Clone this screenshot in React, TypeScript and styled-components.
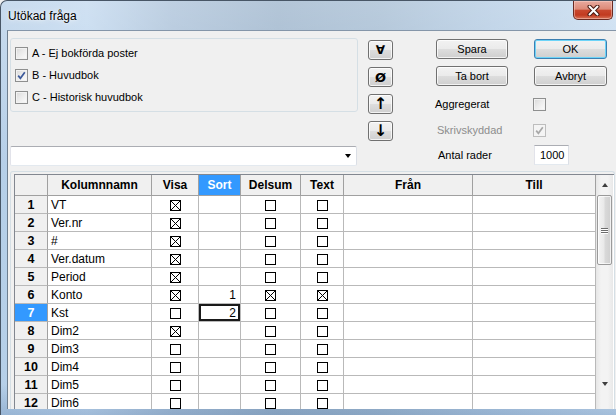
import React from 'react';
import styled, { createGlobalStyle } from 'styled-components';

const GlobalStyle = createGlobalStyle`
  html, body {
    margin: 0;
    padding: 0;
  }
  body {
    background: #f0f0f0;
    font-family: 'Liberation Sans', Arial, sans-serif;
    overflow: hidden;
  }
`;

const Window = styled.div`
  width: 616px;
  height: 415px;
  box-sizing: border-box;
  display: flex;
  flex-direction: column;
  border-top: 1px solid #485666;
  border-left: 1px solid #485666;
  border-top-left-radius: 7px;
  overflow: hidden;
  background:
    linear-gradient(180deg, rgba(255,255,255,0.25) 0%, rgba(255,255,255,0) 40%),
    linear-gradient(90deg, #b6cfe8 0%, #c0d7ee 14%, #a9c0d8 28%, #9bb3cb 45%, #a3bbd2 62%, #b3cbe3 80%, #c5dbf0 100%);
`;

const TitleBar = styled.div`
  height: 29px;
  display: flex;
  align-items: flex-start;
  flex: none;
`;

const Title = styled.div`
  flex: 1;
  padding: 8px 0 0 7px;
  font-size: 12px;
  color: #000;
  text-shadow: 0 0 6px rgba(255,255,255,0.9), 0 0 2px rgba(255,255,255,0.8);
`;

const CloseButton = styled.div`
  width: 40px;
  height: 19px;
  margin-right: 3px;
  box-sizing: border-box;
  border: 1px solid #6a2a22;
  border-top: none;
  border-radius: 0 0 5px 5px;
  background: linear-gradient(180deg, #e8aa9f 0%, #dd8a78 45%, #c8472e 52%, #c23a20 78%, #d8745a 100%);
  box-shadow: inset 0 0 0 1px rgba(255,220,210,0.45);
  display: flex;
  align-items: center;
  justify-content: center;
`;

const Frame = styled.div`
  flex: 1;
  display: flex;
  padding: 0 0 6px 6px;
  min-height: 0;
  background: linear-gradient(180deg, rgba(0,0,0,0) 92%, rgba(60,100,150,0.25) 100%);
`;

const Client = styled.div`
  flex: 1;
  display: flex;
  flex-direction: column;
  background: #f0f0f0;
  border-left: 1px solid #6e7e8f;
  border-top: 1px solid #8596a9;
  min-height: 0;
`;

const TopSection = styled.div`
  height: 140px;
  box-sizing: border-box;
  padding-top: 7px;
  display: flex;
  align-items: flex-start;
  flex: none;
`;

const LeftColumn = styled.div`
  margin-left: 2px;
  width: 348px;
  display: flex;
  flex-direction: column;
`;

const GroupBox = styled.div`
  height: 74px;
  box-sizing: border-box;
  border: 1px solid #d5dfe5;
  border-radius: 3px;
  padding: 3px 0 0 4px;
  display: flex;
  flex-direction: column;
`;

const OptionRow = styled.label`
  height: 22px;
  display: flex;
  align-items: center;
  gap: 4px;
  font-size: 11px;
  color: #000;
`;

const WinCheck = styled.span<{ $disabled?: boolean }>`
  width: 13px;
  height: 13px;
  box-sizing: border-box;
  flex: none;
  border: 1px solid ${p => (p.$disabled ? '#bdbdbd' : '#8e8f8f')};
  background: ${p =>
    p.$disabled
      ? '#f4f4f4'
      : 'linear-gradient(135deg, #d8d8d8 0%, #ebebeb 45%, #fcfcfc 100%)'};
  box-shadow: inset 0 0 0 1px ${p => (p.$disabled ? '#f4f4f4' : '#f2f2f2')};
  display: inline-flex;
  align-items: center;
  justify-content: center;
`;

const Combo = styled.div`
  margin-top: 34px;
  height: 20px;
  width: 347px;
  box-sizing: border-box;
  background: #fff;
  border: 1px solid;
  border-color: #abadb3 #dbdfe6 #e3e9ef #e2e3ea;
  border-radius: 2px;
  display: flex;
  align-items: center;
  justify-content: flex-end;
  padding-right: 5px;
`;

const DownTriangle = styled.span<{ $color?: string; $w?: number }>`
  width: 0;
  height: 0;
  border-left: ${p => (p.$w ?? 7) / 2}px solid transparent;
  border-right: ${p => (p.$w ?? 7) / 2}px solid transparent;
  border-top: ${p => Math.ceil((p.$w ?? 7) / 2)}px solid ${p => p.$color ?? '#000'};
`;

const UpTriangle = styled.span<{ $color?: string; $w?: number }>`
  width: 0;
  height: 0;
  border-left: ${p => (p.$w ?? 7) / 2}px solid transparent;
  border-right: ${p => (p.$w ?? 7) / 2}px solid transparent;
  border-bottom: ${p => Math.ceil((p.$w ?? 7) / 2)}px solid ${p => p.$color ?? '#000'};
`;

const SymbolColumn = styled.div`
  margin-left: 10px;
  margin-top: 2px;
  display: flex;
  flex-direction: column;
  gap: 7px;
`;

const WinButton = styled.button<{ $default?: boolean; $w?: number }>`
  width: ${p => p.$w ?? 72}px;
  height: 20px;
  box-sizing: border-box;
  padding: 0;
  margin: 0;
  border: 1px solid ${p => (p.$default ? '#3c7fb1' : '#707070')};
  border-radius: 3px;
  background: linear-gradient(180deg, #f2f2f2 0%, #ebebeb 48%, #dddddd 52%, #cfcfcf 100%);
  box-shadow: inset 0 0 0 1px ${p => (p.$default ? '#6dd4f8' : 'rgba(255,255,255,0.75)')};
  font-family: 'Liberation Sans', Arial, sans-serif;
  font-size: 11px;
  color: #000;
  display: flex;
  align-items: center;
  justify-content: center;
`;

const SymbolButton = styled(WinButton)<{ $size?: number }>`
  font-family: 'DejaVu Sans', sans-serif;
  font-weight: bold;
  font-size: ${p => p.$size ?? 13}px;
  line-height: 1;
`;

const RightSection = styled.div`
  margin-left: 42px;
  width: 173px;
  display: flex;
  flex-direction: column;
`;

const ButtonRow = styled.div<{ $top: number }>`
  display: flex;
  gap: 26px;
  margin-top: ${p => p.$top}px;
  padding-left: 1px;
`;

const Options = styled.div`
  margin-top: 5px;
  display: flex;
  flex-direction: column;
`;

const SettingRow = styled.div<{ $h?: number }>`
  height: ${p => p.$h ?? 26}px;
  display: grid;
  grid-template-columns: 98px auto;
  align-items: center;
  font-size: 11px;
`;

const SettingLabel = styled.span<{ $disabled?: boolean; $indent?: number }>`
  color: ${p => (p.$disabled ? '#8d8d8d' : '#000')};
  padding-left: ${p => p.$indent ?? 0}px;
`;

const NumberInput = styled.div`
  margin-left: 1px;
  width: 35px;
  height: 20px;
  box-sizing: border-box;
  background: #fff;
  border: 1px solid;
  border-color: #abadb3 #dbdfe6 #e3e9ef #e2e3ea;
  font-size: 11px;
  padding-left: 5px;
  display: flex;
  align-items: center;
`;

const GridPanel = styled.div`
  flex: 1;
  min-height: 0;
  margin: 0 1px 0 2px;
  border: 1px solid #d5dfe5;
  border-bottom: none;
  border-radius: 3px 3px 0 0;
  padding: 2px 0 0 3px;
  display: flex;
  overflow: hidden;
`;

const GridFrame = styled.div`
  flex: 1;
  display: flex;
  border-top: 1px solid #828790;
  border-left: 1px solid #828790;
  background: #fff;
  overflow: hidden;
`;

const Table = styled.div`
  display: grid;
  grid-template-columns: 33px 104px 47px 42px 60px 43px 129px 123px;
  grid-template-rows: 21px;
  grid-auto-rows: 18px;
  align-content: start;
  font-size: 12px;
`;

const HeadCell = styled.div<{ $active?: boolean }>`
  box-sizing: border-box;
  border-right: 1px solid #a0a0a0;
  border-bottom: 1px solid #a0a0a0;
  background: ${p => (p.$active ? '#3399ff' : '#f0f0f0')};
  color: ${p => (p.$active ? '#fff' : '#000')};
  font-weight: bold;
  display: flex;
  align-items: center;
  justify-content: center;
`;

const RowHead = styled(HeadCell)`
  border-bottom-color: #b9b9b9;
  font-size: 12.5px;
`;

const Cell = styled.div<{ $align?: 'left' | 'center' | 'right'; $editing?: boolean }>`
  box-sizing: border-box;
  border-right: 1px solid #b9b9b9;
  border-bottom: 1px solid #b9b9b9;
  display: flex;
  align-items: center;
  justify-content: ${p =>
    p.$align === 'center' ? 'center' : p.$align === 'right' ? 'flex-end' : 'flex-start'};
  padding: ${p => (p.$align === 'right' ? '0 4px 0 0' : p.$align === 'left' ? '0 0 0 3px' : '0')};
  box-shadow: ${p => (p.$editing ? 'inset 0 0 0 2px #1a1a1a' : 'none')};
  color: #000;
`;

const GridBox = styled.span`
  width: 11px;
  height: 11px;
  box-sizing: border-box;
  border: 1px solid #000;
  background: #fff;
  display: block;
  margin-top: 1px;
`;

const ScrollBar = styled.div`
  width: 17px;
  flex: none;
  display: flex;
  flex-direction: column;
  background: linear-gradient(90deg, #e6e6e6 0%, #f3f3f3 30%, #f3f3f3 70%, #e8e8e8 100%);
`;

const ScrollArrow = styled.div`
  height: 20px;
  flex: none;
  display: flex;
  align-items: center;
  justify-content: center;
`;

const ScrollThumb = styled.div`
  height: 70px;
  margin: 0 1px;
  box-sizing: border-box;
  border: 1px solid #9a9a9a;
  border-radius: 2px;
  background: linear-gradient(90deg, #f4f4f4 0%, #e9e9e9 45%, #d9d9d9 55%, #cfcfcf 100%);
  box-shadow: inset 0 0 0 1px rgba(255,255,255,0.7);
  display: flex;
  flex-direction: column;
  align-items: center;
  justify-content: center;
  gap: 1px;
`;

const Grip = styled.span`
  width: 7px;
  height: 1px;
  background: #6b6b6b;
  box-shadow: 0 1px 0 #fff;
`;

const ScrollTrack = styled.div<{ $h?: number }>`
  flex: ${p => (p.$h ? 'none' : '1')};
  height: ${p => (p.$h ? `${p.$h}px` : 'auto')};
`;

type Row = {
  name: string;
  visa: boolean;
  sort?: string;
  delsum?: boolean;
  text?: boolean;
};

const rows: Row[] = [
  { name: 'VT', visa: true },
  { name: 'Ver.nr', visa: true },
  { name: '#', visa: true },
  { name: 'Ver.datum', visa: true },
  { name: 'Period', visa: true },
  { name: 'Konto', visa: true, sort: '1', delsum: true, text: true },
  { name: 'Kst', visa: false, sort: '2' },
  { name: 'Dim2', visa: true },
  { name: 'Dim3', visa: false },
  { name: 'Dim4', visa: false },
  { name: 'Dim5', visa: false },
  { name: 'Dim6', visa: false },
];

const CheckMark = ({ color }: { color: string }) => (
  <svg width="9" height="9" viewBox="0 0 9 9">
    <path d="M1.2 4.6 L3.4 7.3 L7.8 1.2" fill="none" stroke={color} strokeWidth="1.7" />
  </svg>
);

const GridCheck = ({ checked }: { checked?: boolean }) => (
  <GridBox>
    {checked && (
      <svg width="9" height="9" viewBox="0 0 9 9" style={{ display: 'block' }}>
        <path d="M0 0 L9 9 M9 0 L0 9" stroke="#000" strokeWidth="1" />
      </svg>
    )}
  </GridBox>
);

const CloseGlyph = () => (
  <svg width="13" height="11" viewBox="0 0 13 11">
    <path d="M2.5 1.5 L10.5 9.5 M10.5 1.5 L2.5 9.5" stroke="#4a1a12" strokeWidth="4" strokeLinecap="round" />
    <path d="M2.5 1.5 L10.5 9.5 M10.5 1.5 L2.5 9.5" stroke="#fff" strokeWidth="2" strokeLinecap="round" />
  </svg>
);

const headers = ['', 'Kolumnnamn', 'Visa', 'Sort', 'Delsum', 'Text', 'Från', 'Till'];

export default function App() {
  return (
    <>
      <GlobalStyle />
      <Window>
        <TitleBar>
          <Title>Utökad fråga</Title>
          <CloseButton>
            <CloseGlyph />
          </CloseButton>
        </TitleBar>
        <Frame>
          <Client>
            <TopSection>
              <LeftColumn>
                <GroupBox>
                  <OptionRow>
                    <WinCheck />A - Ej bokförda poster
                  </OptionRow>
                  <OptionRow>
                    <WinCheck>
                      <CheckMark color="#3d5a9b" />
                    </WinCheck>
                    B - Huvudbok
                  </OptionRow>
                  <OptionRow>
                    <WinCheck />C - Historisk huvudbok
                  </OptionRow>
                </GroupBox>
                <Combo>
                  <DownTriangle />
                </Combo>
              </LeftColumn>
              <SymbolColumn>
                <SymbolButton $w={25} $size={12}>∀</SymbolButton>
                <SymbolButton $w={25} $size={13}>Ø</SymbolButton>
                <SymbolButton $w={25} $size={16}>↑</SymbolButton>
                <SymbolButton $w={25} $size={16}>↓</SymbolButton>
              </SymbolColumn>
              <RightSection>
                <ButtonRow $top={1}>
                  <WinButton>Spara</WinButton>
                  <WinButton $default $w={73}>OK</WinButton>
                </ButtonRow>
                <ButtonRow $top={7}>
                  <WinButton>Ta bort</WinButton>
                  <WinButton $w={73}>Avbryt</WinButton>
                </ButtonRow>
                <Options>
                  <SettingRow>
                    <SettingLabel>Aggregerat</SettingLabel>
                    <WinCheck />
                  </SettingRow>
                  <SettingRow>
                    <SettingLabel $disabled $indent={2}>Skrivskyddad</SettingLabel>
                    <WinCheck $disabled>
                      <CheckMark color="#a8a8a8" />
                    </WinCheck>
                  </SettingRow>
                  <SettingRow $h={24}>
                    <SettingLabel $indent={3}>Antal rader</SettingLabel>
                    <NumberInput>1000</NumberInput>
                  </SettingRow>
                </Options>
              </RightSection>
            </TopSection>
            <GridPanel>
              <GridFrame>
                <Table>
                  {headers.map((h, i) => (
                    <HeadCell key={i} $active={h === 'Sort'}>
                      {h}
                    </HeadCell>
                  ))}
                  {rows.map((r, i) => (
                    <React.Fragment key={r.name}>
                      <RowHead $active={i === 6}>{i + 1}</RowHead>
                      <Cell $align="left">{r.name}</Cell>
                      <Cell $align="center">
                        <GridCheck checked={r.visa} />
                      </Cell>
                      <Cell $align="right" $editing={i === 6}>
                        {r.sort}
                      </Cell>
                      <Cell $align="center">
                        <GridCheck checked={r.delsum} />
                      </Cell>
                      <Cell $align="center">
                        <GridCheck checked={r.text} />
                      </Cell>
                      <Cell />
                      <Cell />
                    </React.Fragment>
                  ))}
                </Table>
                <ScrollBar>
                  <ScrollArrow>
                    <UpTriangle $color="#3f3f3f" $w={7} />
                  </ScrollArrow>
                  <ScrollThumb>
                    <Grip />
                    <Grip />
                    <Grip />
                  </ScrollThumb>
                  <ScrollTrack />
                  <ScrollArrow>
                    <DownTriangle $color="#3f3f3f" $w={7} />
                  </ScrollArrow>
                  <ScrollTrack $h={15} />
                </ScrollBar>
              </GridFrame>
            </GridPanel>
          </Client>
        </Frame>
      </Window>
    </>
  );
}
